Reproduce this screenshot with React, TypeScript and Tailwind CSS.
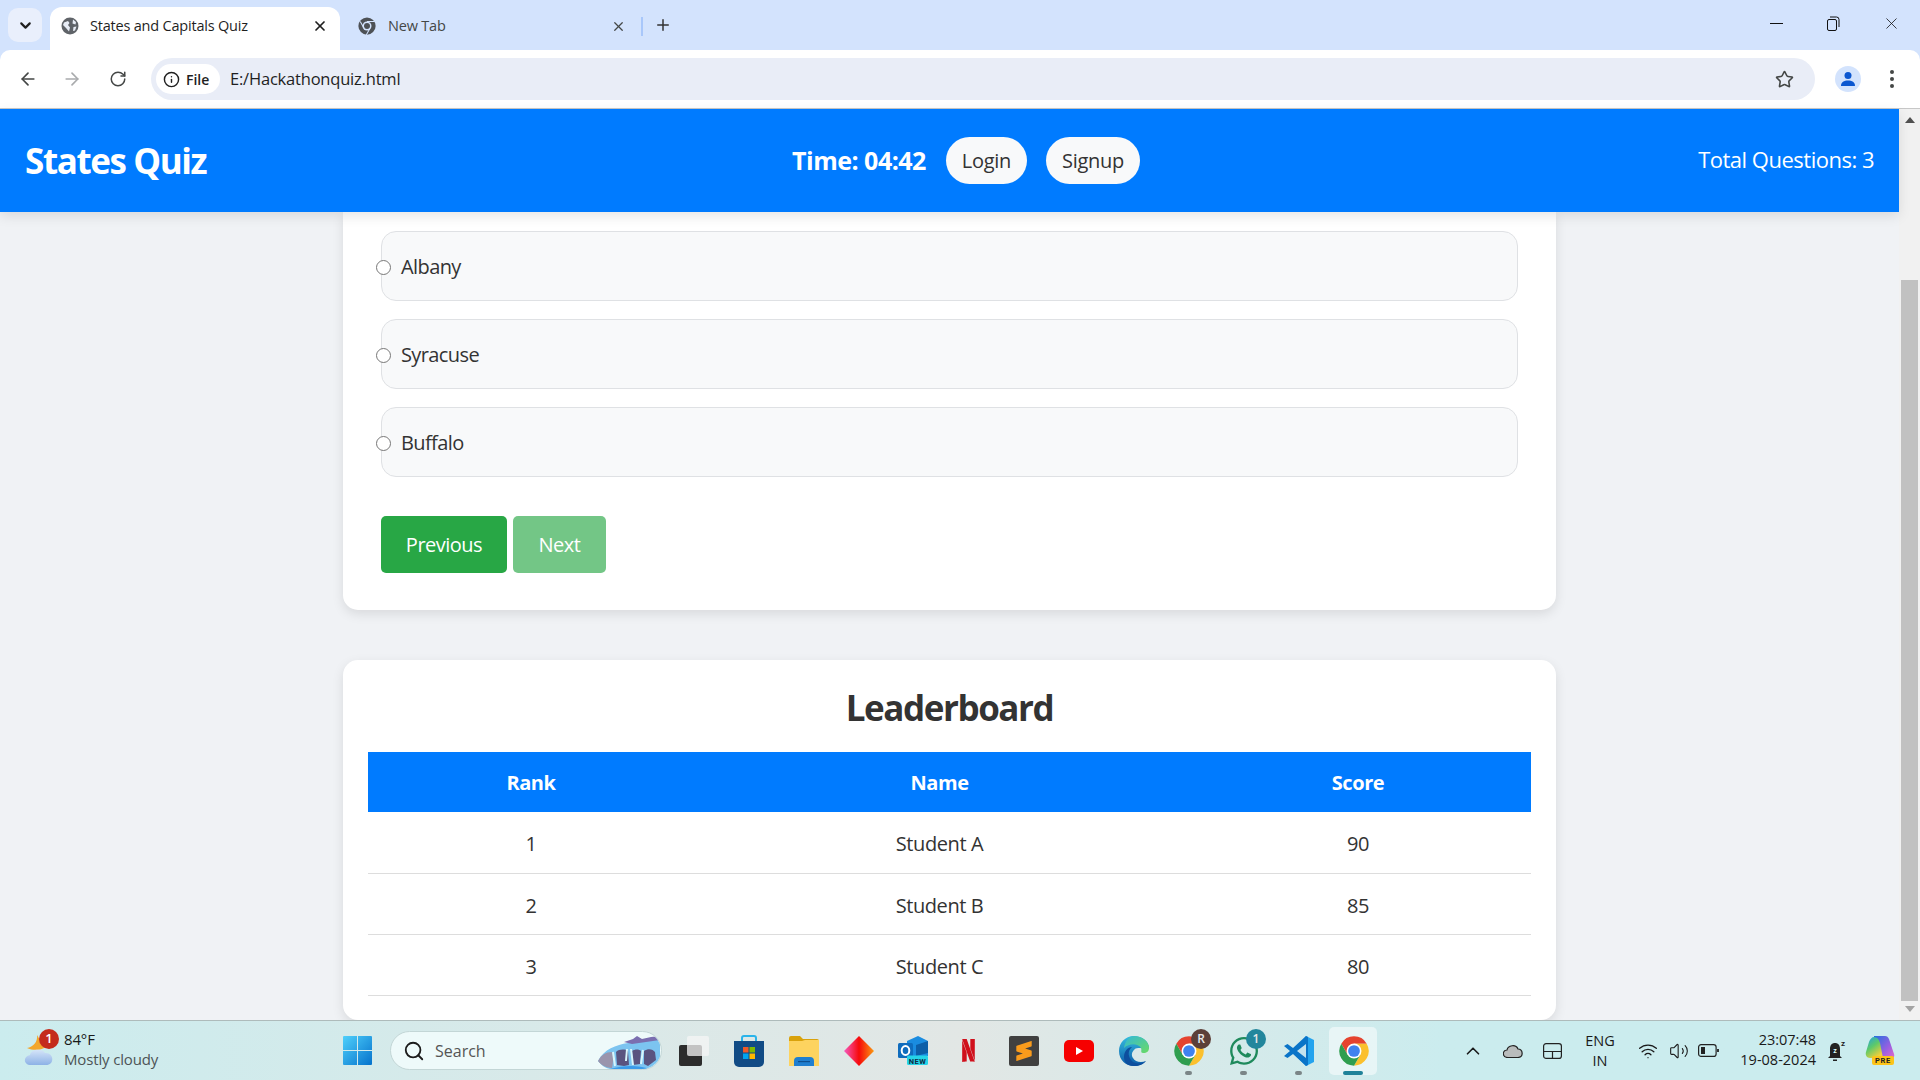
import React from "react";
import { ArrowLeft, ArrowRight, ChevronDown, ChevronUp, Info, Plus, RotateCw, Search, Star, Volume2, Wifi, X } from "lucide-react";
import { FaWhatsapp } from "react-icons/fa";
import { SiNetflix, SiSublimetext } from "react-icons/si";

const options = ["Albany", "Syracuse", "Buffalo"];

const students = [
  { rank: 1, name: "Student A", score: 90 },
  { rank: 2, name: "Student B", score: 85 },
  { rank: 3, name: "Student C", score: 80 },
];

function ChromeLogo({ size = 32 }: { size?: number }) {
  return (
    <svg width={size} height={size} viewBox="0 0 24 24">
      <path d="M2.47 6.5A11 11 0 0 1 21.53 6.5L12 6.5 7.24 14.75Z" fill="#e5432f" />
      <path d="M21.53 6.5A11 11 0 0 1 12 23L16.76 14.75 12 6.5Z" fill="#fbc02d" />
      <path d="M12 23A11 11 0 0 1 2.47 6.5L7.24 14.75 16.76 14.75Z" fill="#2f9e4f" />
      <circle cx="12" cy="12" r="5.6" fill="#fff" />
      <circle cx="12" cy="12" r="4.4" fill="#3f82ee" />
    </svg>
  );
}

function GlobeFavicon() {
  return (
    <svg width="18" height="18" viewBox="0 0 18 18">
      <circle cx="9" cy="9" r="8.5" fill="#5f6368" />
      <path d="M3 5.5 7 4l1.5 2-1.5 2 2 2.5-1 4L5 11 2 8ZM12 2.5l3 2.5-.5 2.5-3-1ZM12.5 10l3-.5-1.5 4-2 .5Z" fill="#e8edf6" />
    </svg>
  );
}

function GrayChromeFavicon() {
  return (
    <svg width="18" height="18" viewBox="0 0 24 24">
      <circle cx="12" cy="12" r="11.5" fill="#4d5156" />
      <circle cx="12" cy="12" r="6" fill="#d3e3fd" />
      <circle cx="12" cy="12" r="4" fill="#4d5156" />
      <path d="M12 6h10M8 15 3 6M16 15l-5 9" stroke="#d3e3fd" strokeWidth="1.4" />
    </svg>
  );
}

function WeatherIcon() {
  return (
    <svg width="32" height="36" viewBox="0 0 32 36">
      <defs>
        <linearGradient id="cloudFill" x1="0" y1="0" x2="0" y2="1">
          <stop offset="0" stopColor="#d5e4f8" />
          <stop offset="1" stopColor="#8db2e6" />
        </linearGradient>
      </defs>
      <path d="M13 2c3 5 5 9 12 9-3 5-14 8-22 4 6-1 11-6 10-13Z" fill="#f3a72b" />
      <path d="M7 32c-8 0-8-9-1-10 1-6 12-7 15-2 9-1 10 12 1 12Z" fill="url(#cloudFill)" />
    </svg>
  );
}

function WindowsLogo() {
  return (
    <svg width="29" height="29" viewBox="0 0 29 29">
      <defs>
        <linearGradient id="winFill" x1="0" y1="0" x2="1" y2="1">
          <stop offset="0" stopColor="#4fd0fb" />
          <stop offset="1" stopColor="#0572cc" />
        </linearGradient>
      </defs>
      <path d="M0 1a1 1 0 0 1 1-1h13v14H0ZM15 0h13a1 1 0 0 1 1 1v13H15ZM0 15h14v14H1a1 1 0 0 1-1-1ZM15 15h14v13a1 1 0 0 1-1 1H15Z" fill="url(#winFill)" />
    </svg>
  );
}

function WaterfallArt() {
  return (
    <svg width="62" height="36" viewBox="0 0 62 36">
      <path d="M0 28C6 16 18 12 30 10l8-5 6 3 9-2 9-1v21c-3 6-8 9-14 10H12C7 35 3 32 0 28Z" fill="#7cc4f0" />
      <path d="M26 9l9-3 4-3 5 3 9-2 9-1v4l-14 2-14 2Z" fill="#7b6fb0" />
      <path d="M0 28c3-6 8-9 14-9 2 5 1 11 0 16-6 0-11-3-14-7Z" fill="#9a95ad" />
      <path d="M18 19c3-3 9-3 12-1l1 14-5 1-7-1ZM34 18c3-2 7-2 9 0l-1 13-7 1ZM46 18c4-3 9-2 11 1l1 8-8 6-4-2Z" fill="#5a5480" />
      <path d="M15 19l2 14M29 16l-1 12M33 16l2 16M45 17l-2 14" stroke="#d9f5fb" strokeWidth="2" fill="none" />
      <path d="M12 36c14-4 28-4 40 0Z" fill="#3a9bea" />
    </svg>
  );
}

function TaskViewIcon() {
  return (
    <svg width="30" height="30" viewBox="0 0 30 30">
      <rect x="0" y="9" width="23" height="21" rx="2" fill="#2c2c2c" />
      <rect x="8" y="0" width="22" height="20" rx="2" fill="#f5f6f6" fillOpacity="0.75" />
    </svg>
  );
}

function StoreIcon() {
  return (
    <svg width="30" height="32" viewBox="0 0 30 32">
      <path d="M8 7V3a2 2 0 0 1 2-2h10a2 2 0 0 1 2 2v4" stroke="#2ab4ea" strokeWidth="2" fill="none" />
      <path d="M0 6h30v21a5 5 0 0 1-5 5H5a5 5 0 0 1-5-5Z" fill="#114b85" />
      <rect x="9" y="12" width="5.5" height="5.5" fill="#f05a28" />
      <rect x="15.5" y="12" width="5.5" height="5.5" fill="#7fba00" />
      <rect x="9" y="18.5" width="5.5" height="5.5" fill="#00a4ef" />
      <rect x="15.5" y="18.5" width="5.5" height="5.5" fill="#ffb900" />
    </svg>
  );
}

function FolderIcon() {
  return (
    <svg width="30" height="30" viewBox="0 0 30 30">
      <path d="M0 2a2 2 0 0 1 2-2h9l3 3h14a2 2 0 0 1 2 2v5H0Z" fill="#d9a20c" />
      <path d="M0 5h13l3-1h14v26H0Z" fill="#fdd35f" />
      <path d="M5 25a4 4 0 0 1 4-4h12a4 4 0 0 1 4 4v5H5Z" fill="#1f7fd0" />
      <rect x="9" y="25" width="12" height="1.2" fill="#0d4f8f" />
    </svg>
  );
}

function DiamondIcon() {
  return (
    <svg width="30" height="30" viewBox="0 0 30 30">
      <defs>
        <linearGradient id="diamondFill" x1="0" y1="0" x2="1" y2="0">
          <stop offset="0" stopColor="#f65ac0" />
          <stop offset="0.5" stopColor="#f60a0a" />
          <stop offset="1" stopColor="#fb9a10" />
        </linearGradient>
      </defs>
      <path d="M15 0 30 15 15 30 0 15Z" fill="url(#diamondFill)" />
    </svg>
  );
}

function OutlookIcon() {
  return (
    <svg width="31" height="29" viewBox="0 0 31 29">
      <path d="M9 5 20 0l10 5v15H9Z" fill="#1a8ce0" />
      <path d="M18 9 30 5v12l-12 3Z" fill="#0c5ea8" />
      <rect x="0" y="7" width="15" height="15" rx="1.5" fill="#0f6cbd" />
      <ellipse cx="7.500" cy="14.500" rx="3.800" ry="4.500" fill="none" stroke="#fff" strokeWidth="2" />
      <rect x="9" y="19.500" width="21" height="9.500" rx="1.500" fill="#25d4e8" />
      <text x="19.500" y="27.500" textAnchor="middle" fontSize="7.500" fontWeight="700" fontFamily="Roboto, sans-serif" letterSpacing="0.4" fill="#102b45">NEW</text>
    </svg>
  );
}

function YoutubeIcon() {
  return (
    <svg width="30" height="22" viewBox="0 0 30 22">
      <rect width="30" height="22" rx="5" fill="#f60000" />
      <path d="M12 7l7 4-7 4Z" fill="#fff" />
    </svg>
  );
}

function EdgeIcon() {
  return (
    <svg width="30" height="30" viewBox="0 0 30 30">
      <defs>
        <linearGradient id="edgeBlue" x1="0" y1="0" x2="0" y2="1">
          <stop offset="0" stopColor="#35bde0" />
          <stop offset="1" stopColor="#0b5aa8" />
        </linearGradient>
        <linearGradient id="edgeGreen" x1="0" y1="0" x2="1" y2="1">
          <stop offset="0" stopColor="#32b8d8" />
          <stop offset="1" stopColor="#6bdb63" />
        </linearGradient>
      </defs>
      <path d="M15 0C6 0 0 7 0 15c0 9 7 15 15 15 5 0 9-2 12-5-5 2-11 1-13-3-2-3-1-6 1-8 1-2 4-2 6-2 3 0 8 2 9 0C30 5 23 0 15 0Z" fill="url(#edgeBlue)" />
      <path d="M15 0c8 0 15 5 15 12 0 3-2 5-6 5-3 0-1-3-2-5-3-5-12-5-17 0 1-7 5-12 10-12Z" fill="url(#edgeGreen)" />
      <path d="M13 11c-5 4-4 11 1 15 3 2 9 2 13-1-2 3-7 5-12 5-7 0-10-4-10-9 0-6 4-10 8-10Z" fill="#0d4f9e" />
    </svg>
  );
}

function VsCodeIcon() {
  return (
    <svg width="30" height="30" viewBox="0 0 30 30">
      <path d="M22 0 30 4v22l-8 4-13-13Z" fill="#23a3ee" />
      <path d="M22 0 9 12 3.5 8 0 10l6 5-6 5 3.5 2L9 18l13 12 2-1V1Z" fill="#0a74c8" />
      <path d="M22 8v14l-9-7Z" fill="#cfe8f0" fillOpacity="0.95" />
    </svg>
  );
}

function CopilotIcon() {
  return (
    <svg width="30" height="29" viewBox="0 0 30 29">
      <defs>
        <linearGradient id="copilotLeft" x1="0" y1="0" x2="0.6" y2="1">
          <stop offset="0" stopColor="#1f9fe8" />
          <stop offset="0.5" stopColor="#5cc96a" />
          <stop offset="1" stopColor="#f4d03a" />
        </linearGradient>
        <linearGradient id="copilotRight" x1="0" y1="0" x2="1" y2="1">
          <stop offset="0" stopColor="#2470e0" />
          <stop offset="0.6" stopColor="#9a5fe0" />
          <stop offset="1" stopColor="#e76ac8" />
        </linearGradient>
      </defs>
      <path d="M9 0h11c2 0 3 1 4 3l5 15c1 3-1 5-4 5H14L12 7c-1-2-2-3-3-3Z" fill="url(#copilotRight)" />
      <path d="M9 1c3 0 5 2 6 6l3 15H5c-3 0-5-3-4-6l3-10c1-3 3-5 5-5Z" fill="url(#copilotLeft)" />
      <rect x="7" y="20" width="22" height="9" rx="2" fill="#fcc419" />
      <text x="18" y="27.400" textAnchor="middle" fontSize="7.500" fontWeight="700" fontFamily="Roboto, sans-serif" letterSpacing="0.7" fill="#222">PRE</text>
    </svg>
  );
}

function TaskbarIcon({ children, dot, badge, badgeColor, active }: { children: React.ReactNode; dot?: boolean; badge?: string; badgeColor?: string; active?: boolean }) {
  return (
    <div className="relative flex h-[58px] w-[55px] items-center justify-center">
      {active && <span className="absolute left-[3px] top-[5px] h-[48px] w-[48px] rounded-[5px] bg-white/50" />}
      <span className="relative flex items-center justify-center">{children}</span>
      {badge && (
        <span className="absolute right-[5px] top-[7px] flex h-[20px] w-[20px] items-center justify-center rounded-full text-[12px] font-semibold text-[#e8e8e8]" style={{ backgroundColor: badgeColor }}>
          {badge}
        </span>
      )}
      {dot && <span className="absolute bottom-[5px] h-[4px] w-[7px] rounded-full bg-[#7b8587]" />}
      {active && <span className="absolute bottom-[5px] left-[17px] h-[4px] w-[20px] rounded-full bg-[#1f8299]" />}
    </div>
  );
}

function BrowserChrome() {
  return (
    <div className="bg-[#d3e3fd] text-[#1f1f1f]">
      <div className="flex h-[50px] items-end pl-[8px]">
        <div className="mb-[8px] flex h-[34px] w-[34px] items-center justify-center rounded-[10px] bg-[#e9effc]">
          <ChevronDown size={17} strokeWidth={3} />
        </div>
        <div className="ml-[8px] flex h-[43px] w-[290px] items-center rounded-t-[12px] bg-white pb-[5px] pl-[11px] pr-[12px]">
          <GlobeFavicon />
          <span className="ml-[11px] flex-1 text-[14.5px] tracking-[-0.2px]">States and Capitals Quiz</span>
          <X size={16} strokeWidth={2.6} />
        </div>
        <div className="flex h-[43px] w-[301px] items-center pb-[5px] pl-[18px] pr-[15px] text-[#444746]">
          <GrayChromeFavicon />
          <span className="ml-[12px] flex-1 text-[14.5px] tracking-[-0.2px]">New Tab</span>
          <X size={15} strokeWidth={2} />
        </div>
        <div className="mb-[14px] h-[19px] w-[2px] bg-[#a8c7fa]" />
        <Plus size={18} strokeWidth={2} className="mb-[16px] ml-[11px] text-[#333]" />
        <div className="mb-[17px] ml-auto flex items-center">
          <span className="mr-[44px] h-[1px] w-[13px] bg-[#111]" />
          <svg width="13" height="15" viewBox="0 0 13 15" className="mr-[42px]" fill="none" stroke="#111">
            <rect x="0.5" y="3.5" width="9" height="11" rx="1.5" />
            <path d="M3 1h6.5A2.5 2.5 0 0 1 12 3.5V11" />
          </svg>
          <X size={19} strokeWidth={1} className="mr-[19px] text-[#111]" />
        </div>
      </div>
      <div className="flex h-[59px] items-center rounded-t-[10px] border-b border-[#c7c7c7] bg-white">
        <ArrowLeft size={20} strokeWidth={2} className="ml-[18px] text-[#444746]" />
        <ArrowRight size={20} strokeWidth={2} className="ml-[24px] text-[#a9abad]" />
        <RotateCw size={18} strokeWidth={2} className="ml-[27px] text-[#444746]" />
        <div className="ml-[24px] flex h-[42px] w-[1664px] items-center rounded-full bg-[#e9edf7] pl-[5px] pr-[21px]">
          <div className="flex h-[30px] w-[64px] items-center rounded-full bg-white pl-[7px] text-[14px] font-semibold text-[#1f1f1f]">
            <Info size={17} strokeWidth={2} />
            <span className="ml-[6px]">File</span>
          </div>
          <span className="ml-[10px] flex-1 text-[16.5px] tracking-[-0.2px]">E:/Hackathonquiz.html</span>
          <Star size={19} strokeWidth={2} className="text-[#444746]" />
        </div>
        <div className="ml-[20px] flex h-[26px] w-[26px] items-center justify-center rounded-full bg-[#d3e3fd]">
          <svg width="16" height="16" viewBox="0 0 16 16" fill="#0b57d0">
            <circle cx="8" cy="4.5" r="3.5" />
            <path d="M1 15c0-4 3-5.500 7-5.500s7 1.500 7 5.500Z" />
          </svg>
        </div>
        <div className="ml-[29px] flex flex-col gap-[3px]">
          <span className="h-[4px] w-[4px] rounded-full bg-[#444746]" />
          <span className="h-[4px] w-[4px] rounded-full bg-[#444746]" />
          <span className="h-[4px] w-[4px] rounded-full bg-[#444746]" />
        </div>
      </div>
    </div>
  );
}

function QuizHeader() {
  return (
    <header className="relative z-10 flex h-[103px] items-center justify-between bg-[#007bff] px-[25px] text-white shadow-[0_4px_12px_rgba(0,0,0,0.1)]">
      <h1 className="w-[416px] pt-[1px] text-[35px] font-bold tracking-[-1.4px]">States Quiz</h1>
      <div className="ml-[1px] flex items-center">
        <span className="pt-[1px] text-[25px] font-bold tracking-[-0.5px]">Time: 04:42</span>
        <button className="ml-[20px] h-[47px] w-[81px] rounded-[25px] bg-[#f8f9fa] pt-[1px] text-[20px] tracking-[-0.3px] text-[#333]">Login</button>
        <button className="ml-[19px] h-[47px] w-[94px] rounded-[25px] bg-[#f8f9fa] pt-[1px] text-[20px] tracking-[-0.3px] text-[#333]">Signup</button>
      </div>
      <span className="-mt-[2px] w-[384px] text-right text-[22px] tracking-[-0.5px]">Total Questions: 3</span>
    </header>
  );
}

function QuestionCard() {
  return (
    <section className="rounded-b-[15px] bg-white px-[38px] pb-[37px] pt-[19px] shadow-[0_4px_12px_rgba(0,0,0,0.1)]">
      <div className="flex flex-col gap-[18px]">
        {options.map((option) => (
          <label key={option} className="flex h-[70px] items-center rounded-[15px] border border-[#dfe1e4] bg-[#f8f9fa] text-[20px] tracking-[-0.6px] text-[#333]">
            <input type="radio" name="answer" className="-ml-[6px] mt-[4px] h-[15px] w-[15px]" />
            <span className="ml-[10px] pt-[2px]">{option}</span>
          </label>
        ))}
      </div>
      <div className="mt-[39px] flex gap-[6px]">
        <button className="h-[57px] w-[126px] rounded-[5px] bg-[#28a745] pt-[1px] text-[20px] tracking-[-0.5px] text-white">Previous</button>
        <button className="h-[57px] w-[93px] rounded-[5px] bg-[#28a745]/65 pt-[1px] text-[20px] tracking-[-0.5px] text-white">Next</button>
      </div>
    </section>
  );
}

function Leaderboard() {
  return (
    <section className="mt-[50px] rounded-[15px] bg-white px-[25px] pb-[24px] pt-[25px] shadow-[0_4px_12px_rgba(0,0,0,0.1)]">
      <h2 className="text-center text-[35px] font-bold leading-[46px] tracking-[-1.44px] text-[#333]">Leaderboard</h2>
      <table className="mt-[21px] w-full table-fixed border-collapse text-[20px] tracking-[-0.4px] text-[#333]">
        <thead>
          <tr className="h-[60px] bg-[#007bff] text-white">
            <th className="w-[326px] pt-[3px] font-bold">Rank</th>
            <th className="w-[491px] pt-[3px] font-bold">Name</th>
            <th className="pt-[3px] font-bold">Score</th>
          </tr>
        </thead>
        <tbody>
          {students.map((student) => (
            <tr key={student.rank} className="h-[61px] border-b border-[#dddddd] text-center first:h-[62px]">
              <td className="pt-[3px]">{student.rank}</td>
              <td className="pt-[3px]">{student.name}</td>
              <td className="pt-[3px]">{student.score}</td>
            </tr>
          ))}
        </tbody>
      </table>
    </section>
  );
}

function Scrollbar() {
  return (
    <div className="flex w-[21px] flex-col items-center bg-[#f1f1f1] pt-[8px]">
      <div className="h-0 w-0 border-x-[5px] border-b-[6px] border-x-transparent border-b-[#505050]" />
      <div className="mt-[157px] h-[721px] w-[17px] bg-[#c1c1c1]" />
      <div className="mt-[5px] h-0 w-0 border-x-[5px] border-t-[6px] border-x-transparent border-t-[#a3a3a3]" />
    </div>
  );
}

function Taskbar() {
  return (
    <footer className="flex h-[60px] items-center border-t border-[#aebbbb] bg-gradient-to-r from-[#cbecee] via-[#e2e7e5] via-50% to-[#cbecee] to-75% text-[#1a1a1a]">
      <div className="relative flex w-[329px] items-center pl-[24px]">
        <WeatherIcon />
        <span className="absolute left-[39px] top-[-4px] flex h-[20px] w-[20px] items-center justify-center rounded-full bg-[#c42b1c] text-[13px] font-semibold text-white">1</span>
        <div className="ml-[8px] -mt-[4px] text-[15px] leading-[20px] tracking-[-0.15px]">
          <div>84°F</div>
          <div className="text-[#4d5456]">Mostly cloudy</div>
        </div>
      </div>
      <div className="flex w-[56px] justify-center">
        <WindowsLogo />
      </div>
      <div className="relative ml-[5px] flex h-[39px] w-[272px] items-center overflow-hidden rounded-full border border-[#c3d6d6] bg-[#eefafa] pl-[12px]">
        <Search size={22} strokeWidth={2} className="text-[#1c1c1c]" />
        <span className="ml-[10px] text-[16px] text-[#555]">Search</span>
        <div className="absolute bottom-0 right-[1px]">
          <WaterfallArt />
        </div>
      </div>
      <div className="ml-[4px] flex items-center">
        <TaskbarIcon><TaskViewIcon /></TaskbarIcon>
        <TaskbarIcon><StoreIcon /></TaskbarIcon>
        <TaskbarIcon><FolderIcon /></TaskbarIcon>
        <TaskbarIcon><DiamondIcon /></TaskbarIcon>
        <TaskbarIcon><OutlookIcon /></TaskbarIcon>
        <TaskbarIcon><SiNetflix size={23} color="#d0101c" /></TaskbarIcon>
        <TaskbarIcon>
          <div className="flex h-[30px] w-[30px] items-center justify-center rounded-[2px] bg-[#404040]">
            <SiSublimetext size={20} color="#f99b1c" />
          </div>
        </TaskbarIcon>
        <TaskbarIcon><YoutubeIcon /></TaskbarIcon>
        <TaskbarIcon><EdgeIcon /></TaskbarIcon>
        <TaskbarIcon dot badge="R" badgeColor="#5c3f38"><ChromeLogo size={32} /></TaskbarIcon>
        <TaskbarIcon dot badge="1" badgeColor="#22869c"><FaWhatsapp size={32} color="#1f8a5c" /></TaskbarIcon>
        <TaskbarIcon dot><VsCodeIcon /></TaskbarIcon>
        <TaskbarIcon active><ChromeLogo size={32} /></TaskbarIcon>
      </div>
      <div className="ml-auto flex items-center pr-[14px] text-[14.5px]">
        <div className="flex w-[40px] justify-center"><ChevronUp size={22} strokeWidth={1.8} /></div>
        <div className="flex w-[40px] justify-center">
          <svg width="20" height="14" viewBox="0 0 20 14">
            <path d="M5 13.500c-6 0-6-7-1-7.500C5 1 13 0 15 5c5 0 6 8 0 8.500Z" fill="#b9bcbc" stroke="#222" strokeWidth="1.2" />
          </svg>
        </div>
        <div className="flex w-[38px] justify-center">
          <svg width="19" height="16" viewBox="0 0 19 16" fill="none" stroke="#222" strokeWidth="1.2">
            <rect x="0.6" y="0.6" width="17.800" height="14.800" rx="2.500" />
            <path d="M0.600 8.500h17.800M9.500 8.500v7" />
          </svg>
        </div>
        <div className="w-[58px] text-center leading-[20px]">
          <div>ENG</div>
          <div>IN</div>
        </div>
        <div className="ml-[1px] flex w-[36px] justify-center"><Wifi size={20} strokeWidth={1.6} /></div>
        <div className="flex w-[26px] justify-center"><Volume2 size={20} strokeWidth={1.3} /></div>
        <div className="flex w-[32px] justify-center">
          <svg width="21" height="13" viewBox="0 0 21 13" fill="none" stroke="#222" strokeWidth="1.2">
            <rect x="0.6" y="0.6" width="17.500" height="11.800" rx="2.500" />
            <rect x="3" y="3" width="4" height="7" fill="#222" stroke="none" />
            <path d="M20 5v3" strokeWidth="1.800" />
          </svg>
        </div>
        <div className="-mt-[2px] w-[92px] text-right leading-[20px]">
          <div>23:07:48</div>
          <div>19-08-2024</div>
        </div>
        <div className="flex w-[38px] justify-center pl-[3px]">
          <svg width="20" height="24" viewBox="0 0 20 24">
            <path d="M3 17V10c0-4 2-6 5-6s5 2 5 6v7l2 2H1ZM6 20.500h4v1.500H6Z" fill="#222" />
            <text x="8" y="14" textAnchor="middle" fontSize="7" fontWeight="700" fontFamily="Roboto, sans-serif" fill="#dff">z</text>
            <text x="16" y="7" textAnchor="middle" fontSize="8" fontWeight="700" fontFamily="Roboto, sans-serif" fill="#222">z</text>
          </svg>
        </div>
        <div className="flex w-[52px] justify-center">
          <CopilotIcon />
        </div>
      </div>
    </footer>
  );
}

export default function App() {
  return (
    <div className="flex h-screen w-full flex-col overflow-hidden font-['Open_Sans',sans-serif]">
      <BrowserChrome />
      <div className="flex min-h-0 flex-1">
        <div className="flex min-w-0 flex-1 flex-col bg-[#f0f2f5]">
          <QuizHeader />
          <main className="mx-auto w-[1213px] flex-1 overflow-visible">
            <QuestionCard />
            <Leaderboard />
          </main>
        </div>
        <Scrollbar />
      </div>
      <div className="relative z-20">
        <Taskbar />
      </div>
    </div>
  );
}
